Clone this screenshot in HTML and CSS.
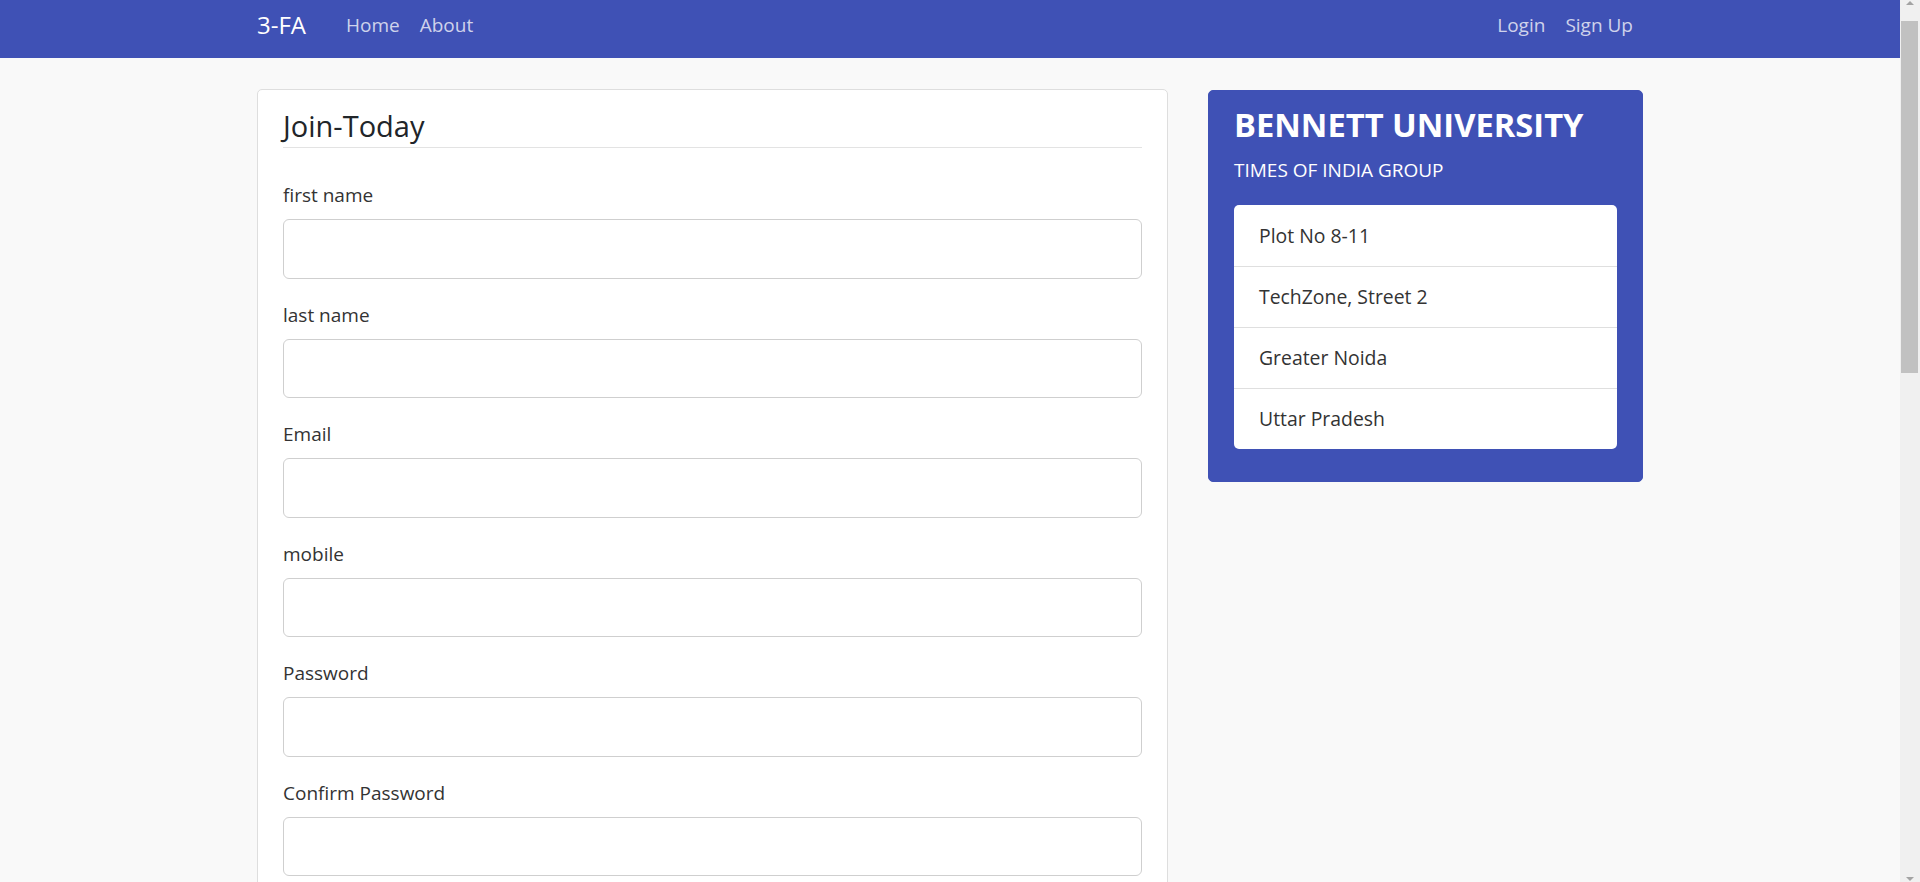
FILE: index.html
```html
<!DOCTYPE html>
<html lang="en">
<head>
<meta charset="utf-8">
<title>Join Today - 3-FA</title>
<link rel="stylesheet" href="styles.css">
</head>
<body>
<div class="page">
  <nav class="navbar">
    <div class="container nav-inner">
      <a class="brand" href="#">3-FA</a>
      <ul class="nav-links">
        <li><a href="#">Home</a></li>
        <li><a href="#">About</a></li>
      </ul>
      <ul class="nav-links nav-right">
        <li><a href="#">Login</a></li>
        <li><a href="#">Sign Up</a></li>
      </ul>
    </div>
  </nav>

  <main class="container main">
    <section class="form-card">
      <form>
        <legend class="form-title">Join-Today</legend>
        <div class="field">
          <label for="fname">first name</label>
          <input id="fname" type="text">
        </div>
        <div class="field">
          <label for="lname">last name</label>
          <input id="lname" type="text">
        </div>
        <div class="field">
          <label for="email">Email</label>
          <input id="email" type="email">
        </div>
        <div class="field">
          <label for="mobile">mobile</label>
          <input id="mobile" type="text">
        </div>
        <div class="field">
          <label for="pass">Password</label>
          <input id="pass" type="password">
        </div>
        <div class="field">
          <label for="cpass">Confirm Password</label>
          <input id="cpass" type="password">
        </div>
        <button class="submit" type="submit">Sign Up</button>
      </form>
    </section>

    <aside class="info-card">
      <h3 class="info-title">BENNETT UNIVERSITY</h3>
      <p class="info-sub">TIMES OF INDIA GROUP</p>
      <ul class="address">
        <li>Plot No 8-11</li>
        <li>TechZone, Street 2</li>
        <li>Greater Noida</li>
        <li>Uttar Pradesh</li>
      </ul>
    </aside>
  </main>
</div>

<div class="scrollbar" aria-hidden="true">
  <span class="sb-arrow sb-up"></span>
  <span class="sb-thumb"></span>
  <span class="sb-arrow sb-down"></span>
</div>
</body>
</html>
```

FILE: styles.css
```css
html, body {
  margin: 0;
  padding: 0;
}

body {
  background: #f9f9f9;
  color: #212529;
  font-family: "Open Sans", "Noto Sans", "Liberation Sans", sans-serif;
  font-size: 20px;
  line-height: 1.5;
}

.page {
  margin-right: 20px;
}

.container {
  width: 1386px;
  margin: 0 auto;
}

/* ---------- navbar ---------- */
.navbar {
  background: #3f51b5;
  height: 58px;
}

.nav-inner {
  display: flex;
  align-items: flex-start;
  height: 100%;
  padding-top: 7px;
  box-sizing: border-box;
}

.brand {
  color: #fff;
  text-decoration: none;
  font-size: 24px;
  line-height: 36px;
  margin-right: 30px;
}

.nav-links {
  list-style: none;
  margin: 3px 0 0;
  padding: 0;
  display: flex;
}

.nav-links a {
  display: block;
  padding: 0 10px;
  color: rgba(255, 255, 255, 0.75);
  text-decoration: none;
  font-size: 19px;
  line-height: 30px;
}

.nav-right {
  margin-left: auto;
}

/* ---------- main ---------- */
.main {
  display: flex;
  align-items: flex-start;
  gap: 40px;
  padding-top: 31px;
  padding-bottom: 31px;
}

.form-card {
  width: 911px;
  box-sizing: border-box;
  background: #fff;
  border: 1px solid #dedede;
  border-radius: 5px;
  padding: 18px 25px 25px;
}

.form-title {
  display: block;
  width: 100%;
  font-size: 29px;
  line-height: 36px;
  padding: 0 0 3px;
  margin: 0 0 31px;
  border-bottom: 1px solid #e3e3e3;
  color: #212529;
}

.field {
  margin-bottom: 20px;
}

.field label {
  display: block;
  font-size: 19px;
  line-height: 30px;
  padding-top: 1px;
  margin-bottom: 9px;
  color: #333;
}

.field input {
  display: block;
  width: 100%;
  box-sizing: border-box;
  height: 59.5px;
  border: 1px solid #cfcfcf;
  border-radius: 6px;
  background: #fff;
  padding: 10px 20px;
  font: inherit;
}

.submit {
  font: inherit;
  color: #fff;
  background: #3f51b5;
  border: 0;
  border-radius: 5px;
  padding: 8px 20px;
}

/* ---------- info card ---------- */
.info-card {
  width: 435px;
  box-sizing: border-box;
  background: #3f51b5;
  border: 1px solid #3f51b5;
  border-radius: 5px;
  padding: 13px 25px 32px;
  color: #fff;
  margin-top: 1px;
}

.info-title {
  margin: 0;
  font-size: 32.7px;
  font-weight: 700;
  line-height: 42px;
}

.info-sub {
  margin: 9px 0 20px;
  font-size: 19px;
  line-height: 30px;
}

.address {
  list-style: none;
  margin: 0;
  padding: 0;
  background: #fff;
  border-radius: 5px;
  color: #333;
}

.address li {
  padding: 15px 25px;
  font-size: 19.4px;
  line-height: 30px;
  border-top: 1px solid #dfdfdf;
}

.address li:first-child {
  border-top: 0;
  padding-top: 16px;
}

/* ---------- window scrollbar (as captured in the reference) ---------- */
.scrollbar {
  position: fixed;
  top: 0;
  right: 0;
  bottom: 0;
  width: 20px;
  background: #f0f0f0;
  display: flex;
  flex-direction: column;
  align-items: center;
}

.sb-arrow {
  height: 20px;
  width: 20px;
  flex: none;
  position: relative;
}

.sb-arrow::after {
  content: "";
  position: absolute;
  left: 6px;
  width: 0;
  height: 0;
  border-left: 4px solid transparent;
  border-right: 4px solid transparent;
}

.sb-up::after {
  top: 1px;
  border-bottom: 4px solid #a3a3a3;
}

.sb-down {
  margin-top: auto;
}

.sb-down::after {
  bottom: 1px;
  border-top: 4px solid #a3a3a3;
}

.sb-thumb {
  align-self: stretch;
  margin: 1px 2px 0 1px;
  height: 352px;
  background: #c1c1c1;
}
```
